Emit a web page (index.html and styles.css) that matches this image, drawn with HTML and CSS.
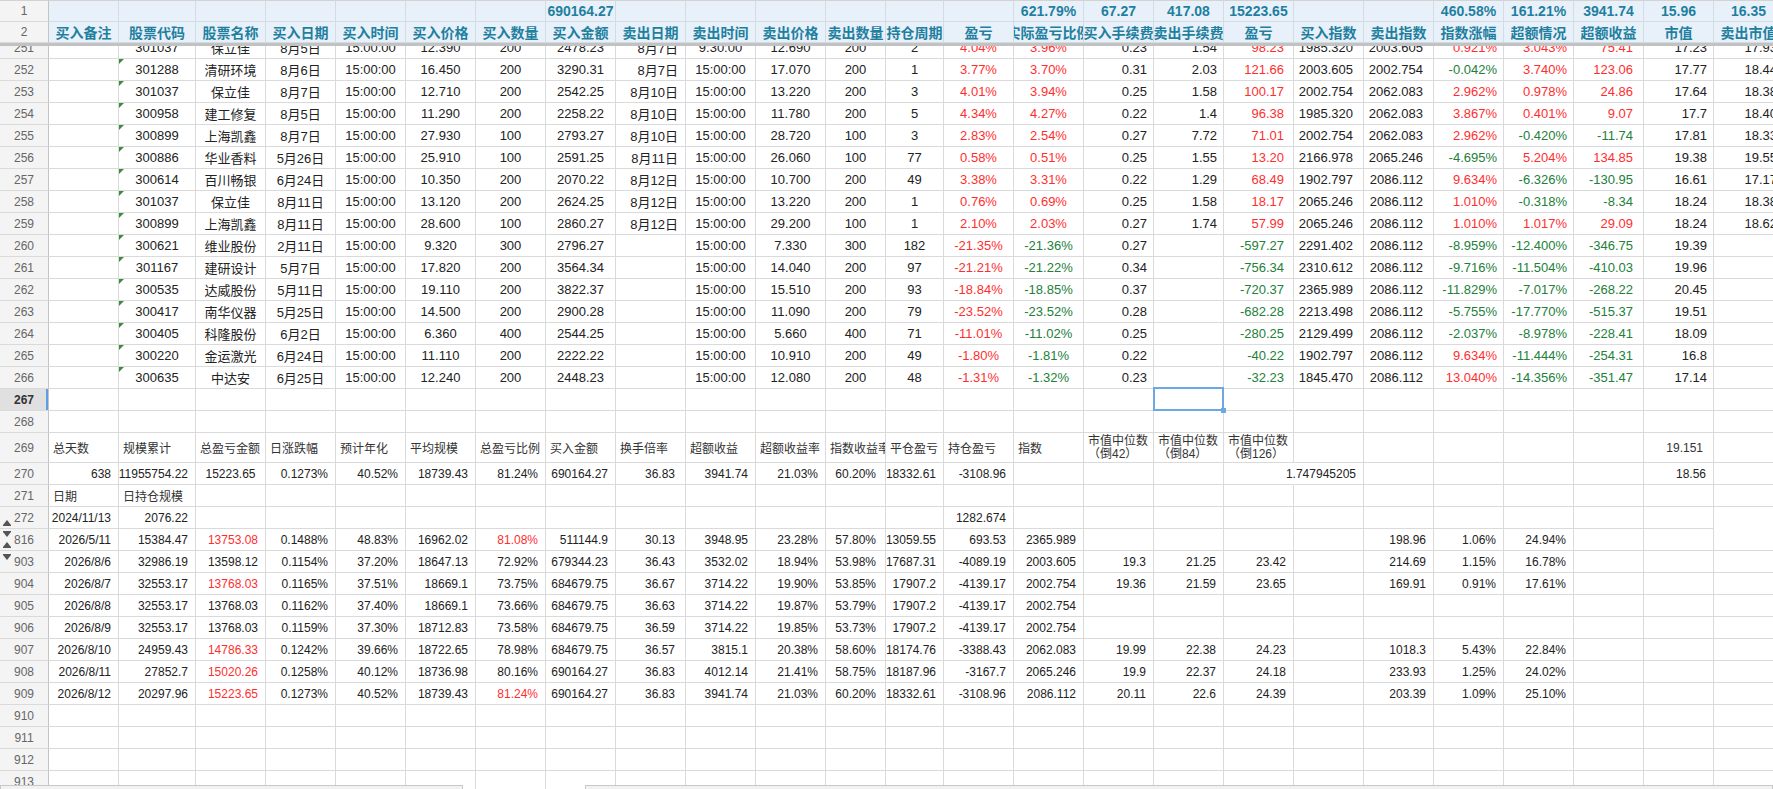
FILE: index.html
```html
<!DOCTYPE html>
<html lang="zh-CN">
<head>
<meta charset="utf-8">
<title>交易记录</title>
<link rel="stylesheet" href="styles.css">
</head>
<body>
<div class="sheet">
  <div class="frozen">
    <div class="r r1"><span>1</span><span></span><span></span><span></span><span></span><span></span><span></span><span></span><span>690164.27</span><span></span><span></span><span></span><span></span><span></span><span></span><span>621.79%</span><span>67.27</span><span>417.08</span><span>15223.65</span><span></span><span></span><span>460.58%</span><span>161.21%</span><span>3941.74</span><span>15.96</span><span>16.35</span></div>
    <div class="r r2"><span>2</span><span>买入备注</span><span>股票代码</span><span>股票名称</span><span>买入日期</span><span>买入时间</span><span>买入价格</span><span>买入数量</span><span>买入金额</span><span>卖出日期</span><span>卖出时间</span><span>卖出价格</span><span>卖出数量</span><span>持仓周期</span><span>盈亏</span><span>实际盈亏比例</span><span>买入手续费</span><span>卖出手续费</span><span>盈亏</span><span>买入指数</span><span>卖出指数</span><span>指数涨幅</span><span>超额情况</span><span>超额收益</span><span>市值</span><span>卖出市值</span></div>
  </div>
  <div class="divider"></div>
  <div class="body">
    <div class="data">
      <div class="r"><span>251</span><span></span><span>301037</span><span>保立佳</span><span>8月5日</span><span>15:00:00</span><span>12.390</span><span>200</span><span>2478.23</span><span>8月7日</span><span>9:30:00</span><span>12.690</span><span>200</span><span>2</span><span class="up">4.04%</span><span class="up">3.96%</span><span>0.23</span><span>1.54</span><span class="up">98.23</span><span>1985.320</span><span>2003.605</span><span class="up">0.921%</span><span class="up">3.043%</span><span class="up">75.41</span><span>17.23</span><span>17.93</span></div>
      <div class="r"><span>252</span><span></span><span>301288</span><span>清研环境</span><span>8月6日</span><span>15:00:00</span><span>16.450</span><span>200</span><span>3290.31</span><span>8月7日</span><span>15:00:00</span><span>17.070</span><span>200</span><span>1</span><span class="up">3.77%</span><span class="up">3.70%</span><span>0.31</span><span>2.03</span><span class="up">121.66</span><span>2003.605</span><span>2002.754</span><span class="dn">-0.042%</span><span class="up">3.740%</span><span class="up">123.06</span><span>17.77</span><span>18.44</span></div>
      <div class="r"><span>253</span><span></span><span>301037</span><span>保立佳</span><span>8月7日</span><span>15:00:00</span><span>12.710</span><span>200</span><span>2542.25</span><span>8月10日</span><span>15:00:00</span><span>13.220</span><span>200</span><span>3</span><span class="up">4.01%</span><span class="up">3.94%</span><span>0.25</span><span>1.58</span><span class="up">100.17</span><span>2002.754</span><span>2062.083</span><span class="up">2.962%</span><span class="up">0.978%</span><span class="up">24.86</span><span>17.64</span><span>18.38</span></div>
      <div class="r"><span>254</span><span></span><span>300958</span><span>建工修复</span><span>8月5日</span><span>15:00:00</span><span>11.290</span><span>200</span><span>2258.22</span><span>8月10日</span><span>15:00:00</span><span>11.780</span><span>200</span><span>5</span><span class="up">4.34%</span><span class="up">4.27%</span><span>0.22</span><span>1.4</span><span class="up">96.38</span><span>1985.320</span><span>2062.083</span><span class="up">3.867%</span><span class="up">0.401%</span><span class="up">9.07</span><span>17.7</span><span>18.40</span></div>
      <div class="r"><span>255</span><span></span><span>300899</span><span>上海凯鑫</span><span>8月7日</span><span>15:00:00</span><span>27.930</span><span>100</span><span>2793.27</span><span>8月10日</span><span>15:00:00</span><span>28.720</span><span>100</span><span>3</span><span class="up">2.83%</span><span class="up">2.54%</span><span>0.27</span><span>7.72</span><span class="up">71.01</span><span>2002.754</span><span>2062.083</span><span class="up">2.962%</span><span class="dn">-0.420%</span><span class="dn">-11.74</span><span>17.81</span><span>18.33</span></div>
      <div class="r"><span>256</span><span></span><span>300886</span><span>华业香料</span><span>5月26日</span><span>15:00:00</span><span>25.910</span><span>100</span><span>2591.25</span><span>8月11日</span><span>15:00:00</span><span>26.060</span><span>100</span><span>77</span><span class="up">0.58%</span><span class="up">0.51%</span><span>0.25</span><span>1.55</span><span class="up">13.20</span><span>2166.978</span><span>2065.246</span><span class="dn">-4.695%</span><span class="up">5.204%</span><span class="up">134.85</span><span>19.38</span><span>19.55</span></div>
      <div class="r"><span>257</span><span></span><span>300614</span><span>百川畅银</span><span>6月24日</span><span>15:00:00</span><span>10.350</span><span>200</span><span>2070.22</span><span>8月12日</span><span>15:00:00</span><span>10.700</span><span>200</span><span>49</span><span class="up">3.38%</span><span class="up">3.31%</span><span>0.22</span><span>1.29</span><span class="up">68.49</span><span>1902.797</span><span>2086.112</span><span class="up">9.634%</span><span class="dn">-6.326%</span><span class="dn">-130.95</span><span>16.61</span><span>17.17</span></div>
      <div class="r"><span>258</span><span></span><span>301037</span><span>保立佳</span><span>8月11日</span><span>15:00:00</span><span>13.120</span><span>200</span><span>2624.25</span><span>8月12日</span><span>15:00:00</span><span>13.220</span><span>200</span><span>1</span><span class="up">0.76%</span><span class="up">0.69%</span><span>0.25</span><span>1.58</span><span class="up">18.17</span><span>2065.246</span><span>2086.112</span><span class="up">1.010%</span><span class="dn">-0.318%</span><span class="dn">-8.34</span><span>18.24</span><span>18.38</span></div>
      <div class="r"><span>259</span><span></span><span>300899</span><span>上海凯鑫</span><span>8月11日</span><span>15:00:00</span><span>28.600</span><span>100</span><span>2860.27</span><span>8月12日</span><span>15:00:00</span><span>29.200</span><span>100</span><span>1</span><span class="up">2.10%</span><span class="up">2.03%</span><span>0.27</span><span>1.74</span><span class="up">57.99</span><span>2065.246</span><span>2086.112</span><span class="up">1.010%</span><span class="up">1.017%</span><span class="up">29.09</span><span>18.24</span><span>18.62</span></div>
      <div class="r"><span>260</span><span></span><span>300621</span><span>维业股份</span><span>2月11日</span><span>15:00:00</span><span>9.320</span><span>300</span><span>2796.27</span><span></span><span>15:00:00</span><span>7.330</span><span>300</span><span>182</span><span class="up">-21.35%</span><span class="dn">-21.36%</span><span>0.27</span><span></span><span class="dn">-597.27</span><span>2291.402</span><span>2086.112</span><span class="dn">-8.959%</span><span class="dn">-12.400%</span><span class="dn">-346.75</span><span>19.39</span><span></span></div>
      <div class="r"><span>261</span><span></span><span>301167</span><span>建研设计</span><span>5月7日</span><span>15:00:00</span><span>17.820</span><span>200</span><span>3564.34</span><span></span><span>15:00:00</span><span>14.040</span><span>200</span><span>97</span><span class="up">-21.21%</span><span class="dn">-21.22%</span><span>0.34</span><span></span><span class="dn">-756.34</span><span>2310.612</span><span>2086.112</span><span class="dn">-9.716%</span><span class="dn">-11.504%</span><span class="dn">-410.03</span><span>19.96</span><span></span></div>
      <div class="r"><span>262</span><span></span><span>300535</span><span>达威股份</span><span>5月11日</span><span>15:00:00</span><span>19.110</span><span>200</span><span>3822.37</span><span></span><span>15:00:00</span><span>15.510</span><span>200</span><span>93</span><span class="up">-18.84%</span><span class="dn">-18.85%</span><span>0.37</span><span></span><span class="dn">-720.37</span><span>2365.989</span><span>2086.112</span><span class="dn">-11.829%</span><span class="dn">-7.017%</span><span class="dn">-268.22</span><span>20.45</span><span></span></div>
      <div class="r"><span>263</span><span></span><span>300417</span><span>南华仪器</span><span>5月25日</span><span>15:00:00</span><span>14.500</span><span>200</span><span>2900.28</span><span></span><span>15:00:00</span><span>11.090</span><span>200</span><span>79</span><span class="up">-23.52%</span><span class="dn">-23.52%</span><span>0.28</span><span></span><span class="dn">-682.28</span><span>2213.498</span><span>2086.112</span><span class="dn">-5.755%</span><span class="dn">-17.770%</span><span class="dn">-515.37</span><span>19.51</span><span></span></div>
      <div class="r"><span>264</span><span></span><span>300405</span><span>科隆股份</span><span>6月2日</span><span>15:00:00</span><span>6.360</span><span>400</span><span>2544.25</span><span></span><span>15:00:00</span><span>5.660</span><span>400</span><span>71</span><span class="up">-11.01%</span><span class="dn">-11.02%</span><span>0.25</span><span></span><span class="dn">-280.25</span><span>2129.499</span><span>2086.112</span><span class="dn">-2.037%</span><span class="dn">-8.978%</span><span class="dn">-228.41</span><span>18.09</span><span></span></div>
      <div class="r"><span>265</span><span></span><span>300220</span><span>金运激光</span><span>6月24日</span><span>15:00:00</span><span>11.110</span><span>200</span><span>2222.22</span><span></span><span>15:00:00</span><span>10.910</span><span>200</span><span>49</span><span class="up">-1.80%</span><span class="dn">-1.81%</span><span>0.22</span><span></span><span class="dn">-40.22</span><span>1902.797</span><span>2086.112</span><span class="up">9.634%</span><span class="dn">-11.444%</span><span class="dn">-254.31</span><span>16.8</span><span></span></div>
      <div class="r"><span>266</span><span></span><span>300635</span><span>中达安</span><span>6月25日</span><span>15:00:00</span><span>12.240</span><span>200</span><span>2448.23</span><span></span><span>15:00:00</span><span>12.080</span><span>200</span><span>48</span><span class="up">-1.31%</span><span class="dn">-1.32%</span><span>0.23</span><span></span><span class="dn">-32.23</span><span>1845.470</span><span>2086.112</span><span class="up">13.040%</span><span class="dn">-14.356%</span><span class="dn">-351.47</span><span>17.14</span><span></span></div>
    </div>
    <div class="sum">
      <div class="r cur"><span>267</span><span></span><span></span><span></span><span></span><span></span><span></span><span></span><span></span><span></span><span></span><span></span><span></span><span></span><span></span><span></span><span></span><span class="sel"></span><span></span><span></span><span></span><span></span><span></span><span></span><span></span><span></span></div>
      <div class="r"><span>268</span><span></span><span></span><span></span><span></span><span></span><span></span><span></span><span></span><span></span><span></span><span></span><span></span><span></span><span></span><span></span><span></span><span></span><span></span><span></span><span></span><span></span><span></span><span></span><span></span><span></span></div>
      <div class="r lbl tall"><span>269</span><span>总天数</span><span>规模累计</span><span>总盈亏金额</span><span>日涨跌幅</span><span>预计年化</span><span>平均规模</span><span>总盈亏比例</span><span>买入金额</span><span>换手倍率</span><span>超额收益</span><span>超额收益率</span><span>指数收益率</span><span>平仓盈亏</span><span>持仓盈亏</span><span>指数</span><span><em class="two">市值中位数<br>（倒42）</em></span><span><em class="two">市值中位数<br>（倒84）</em></span><span><em class="two">市值中位数<br>（倒126）</em></span><span></span><span></span><span></span><span></span><span></span><span class="ra">19.151</span><span></span></div>
      <div class="r"><span>270</span><span>638</span><span>11955754.22</span><span class="ctr">15223.65</span><span>0.1273%</span><span>40.52%</span><span>18739.43</span><span>81.24%</span><span>690164.27</span><span>36.83</span><span>3941.74</span><span>21.03%</span><span>60.20%</span><span>18332.61</span><span>-3108.96</span><span></span><span></span><span></span><span class="nb"></span><span class="ovf">1.747945205</span><span></span><span></span><span></span><span></span><span>18.56</span><span></span></div>
      <div class="r lbl"><span>271</span><span>日期</span><span>日持仓规模</span><span></span><span></span><span></span><span></span><span></span><span></span><span></span><span></span><span></span><span></span><span></span><span></span><span></span><span></span><span></span><span></span><span></span><span></span><span></span><span></span><span></span><span></span><span></span></div>
      <div class="r"><span>272<i class="tu m272"></i></span><span>2024/11/13</span><span>2076.22</span><span></span><span></span><span></span><span></span><span></span><span></span><span></span><span></span><span></span><span></span><span></span><span>1282.674</span><span></span><span></span><span></span><span></span><span></span><span></span><span></span><span></span><span></span><span></span></div>
      <div class="r"><span>816<i class="td m816a"></i><i class="tu m816b"></i></span><span>2026/5/11</span><span>15384.47</span><span class="up">13753.08</span><span>0.1488%</span><span>48.83%</span><span>16962.02</span><span class="up">81.08%</span><span>511144.9</span><span>30.13</span><span>3948.95</span><span>23.28%</span><span>57.80%</span><span>13059.55</span><span>693.53</span><span>2365.989</span><span></span><span></span><span></span><span></span><span>198.96</span><span>1.06%</span><span>24.94%</span><span></span><span></span><span></span></div>
      <div class="r"><span>903<i class="td m903"></i></span><span>2026/8/6</span><span>32986.19</span><span>13598.12</span><span>0.1154%</span><span>37.20%</span><span>18647.13</span><span>72.92%</span><span>679344.23</span><span>36.43</span><span>3532.02</span><span>18.94%</span><span>53.98%</span><span>17687.31</span><span>-4089.19</span><span>2003.605</span><span>19.3</span><span>21.25</span><span>23.42</span><span></span><span>214.69</span><span>1.15%</span><span>16.78%</span><span></span><span></span><span></span></div>
      <div class="r"><span>904</span><span>2026/8/7</span><span>32553.17</span><span class="up">13768.03</span><span>0.1165%</span><span>37.51%</span><span>18669.1</span><span>73.75%</span><span>684679.75</span><span>36.67</span><span>3714.22</span><span>19.90%</span><span>53.85%</span><span>17907.2</span><span>-4139.17</span><span>2002.754</span><span>19.36</span><span>21.59</span><span>23.65</span><span></span><span>169.91</span><span>0.91%</span><span>17.61%</span><span></span><span></span><span></span></div>
      <div class="r"><span>905</span><span>2026/8/8</span><span>32553.17</span><span>13768.03</span><span>0.1162%</span><span>37.40%</span><span>18669.1</span><span>73.66%</span><span>684679.75</span><span>36.63</span><span>3714.22</span><span>19.87%</span><span>53.79%</span><span>17907.2</span><span>-4139.17</span><span>2002.754</span><span></span><span></span><span></span><span></span><span></span><span></span><span></span><span></span><span></span><span></span></div>
      <div class="r"><span>906</span><span>2026/8/9</span><span>32553.17</span><span>13768.03</span><span>0.1159%</span><span>37.30%</span><span>18712.83</span><span>73.58%</span><span>684679.75</span><span>36.59</span><span>3714.22</span><span>19.85%</span><span>53.73%</span><span>17907.2</span><span>-4139.17</span><span>2002.754</span><span></span><span></span><span></span><span></span><span></span><span></span><span></span><span></span><span></span><span></span></div>
      <div class="r"><span>907</span><span>2026/8/10</span><span>24959.43</span><span class="up">14786.33</span><span>0.1242%</span><span>39.66%</span><span>18722.65</span><span>78.98%</span><span>684679.75</span><span>36.57</span><span>3815.1</span><span>20.38%</span><span>58.60%</span><span>18174.76</span><span>-3388.43</span><span>2062.083</span><span>19.99</span><span>22.38</span><span>24.23</span><span></span><span>1018.3</span><span>5.43%</span><span>22.84%</span><span></span><span></span><span></span></div>
      <div class="r"><span>908</span><span>2026/8/11</span><span>27852.7</span><span class="up">15020.26</span><span>0.1258%</span><span>40.12%</span><span>18736.98</span><span>80.16%</span><span>690164.27</span><span>36.83</span><span>4012.14</span><span>21.41%</span><span>58.75%</span><span>18187.96</span><span>-3167.7</span><span>2065.246</span><span>19.9</span><span>22.37</span><span>24.18</span><span></span><span>233.93</span><span>1.25%</span><span>24.02%</span><span></span><span></span><span></span></div>
      <div class="r"><span>909</span><span>2026/8/12</span><span>20297.96</span><span class="up">15223.65</span><span>0.1273%</span><span>40.52%</span><span>18739.43</span><span class="up">81.24%</span><span>690164.27</span><span>36.83</span><span>3941.74</span><span>21.03%</span><span>60.20%</span><span>18332.61</span><span>-3108.96</span><span>2086.112</span><span>20.11</span><span>22.6</span><span>24.39</span><span></span><span>203.39</span><span>1.09%</span><span>25.10%</span><span></span><span></span><span></span></div>
      <div class="r"><span>910</span><span></span><span></span><span></span><span></span><span></span><span></span><span></span><span></span><span></span><span></span><span></span><span></span><span></span><span></span><span></span><span></span><span></span><span></span><span></span><span></span><span></span><span></span><span></span><span></span><span></span></div>
      <div class="r"><span>911</span><span></span><span></span><span></span><span></span><span></span><span></span><span></span><span></span><span></span><span></span><span></span><span></span><span></span><span></span><span></span><span></span><span></span><span></span><span></span><span></span><span></span><span></span><span></span><span></span><span></span></div>
      <div class="r"><span>912</span><span></span><span></span><span></span><span></span><span></span><span></span><span></span><span></span><span></span><span></span><span></span><span></span><span></span><span></span><span></span><span></span><span></span><span></span><span></span><span></span><span></span><span></span><span></span><span></span><span></span></div>
      <div class="r"><span>913</span><span></span><span></span><span></span><span></span><span></span><span></span><span></span><span></span><span></span><span></span><span></span><span></span><span></span><span></span><span></span><span></span><span></span><span></span><span></span><span></span><span></span><span></span><span></span><span></span><span></span></div>
    </div>
  </div>
  <div class="hbar hbar-a"></div>
  <div class="hbar hbar-b"></div>
</div>
</body>
</html>
```
FILE: styles.css
```css
* { box-sizing: border-box; }
html, body { margin: 0; padding: 0; background: #fff; }
body {
  font-family: "Liberation Sans", "Noto Sans CJK SC", Arial, sans-serif;
  color: #222;
  overflow: hidden;
}
.sheet {
  position: relative;
  width: 1773px;
  height: 789px;
  overflow: hidden;
  display: flex;
  flex-direction: column;
}
.frozen { flex: none; }
.divider { flex: none; height: 3px; width: 1784px; background: #c2c2c2; }
.body { flex: 1 1 auto; min-height: 0; overflow: hidden; }

.r {
  display: grid;
  grid-template-columns: 49px 70px 77px repeat(9, 70px) 60px 58px repeat(12, 70px);
  width: 1784px;
  height: 22px;
}
.r > span {
  position: relative;
  display: flex;
  align-items: center;
  justify-content: center;
  overflow: hidden;
  white-space: nowrap;
  border-right: 1px solid #dadada;
  border-bottom: 1px solid #dadada;
  font-size: 13px;
}
.r > span:first-child {
  background: #f4f4f4;
  color: #666;
  font-size: 12px;
  border-right-color: #c4c4c4;
}

/* frozen header rows */
.frozen .r > span {
  background: #e8f1fa;
  color: #1f7f9f;
  font-weight: bold;
  font-size: 14px;
  border-color: #d3dbe3;
}
.frozen .r > span:first-child {
  background: #f4f4f4;
  color: #666;
  font-weight: normal;
  font-size: 12px;
  border-right-color: #c4c4c4;
}
.frozen .r1 > span { border-top: 1px solid #d3d3d3; }
.frozen .r2 { height: 21px; }

/* scrolled data rows */
.data .r:first-child { margin-top: -9px; }
.data .r > span:nth-child(3)::before {
  content: "";
  position: absolute;
  left: 0;
  top: 0;
  border-top: 5px solid #3a8d3a;
  border-right: 5px solid transparent;
}
.data .r > span:nth-child(10),
.data .r > span:nth-child(n+17) {
  justify-content: flex-end;
  padding-right: 6px;
}
.data .r > span:nth-child(10) { padding-right: 7px; }
.data .r > span:nth-child(19) { padding-right: 9px; }
.data .r > span:nth-child(20),
.data .r > span:nth-child(21),
.data .r > span:nth-child(24) { padding-right: 10px; }

.up { color: #ff2e2e; }
.dn { color: #22803a; }

/* summary block */
.sum .r > span {
  font-size: 12px;
  justify-content: flex-end;
  padding-right: 7px;
}
.sum .r > span:first-child { justify-content: center; padding: 0; }
.sum .r > span:nth-child(10) { padding-right: 10px; }
.sum .r > span:nth-child(13) { padding-right: 9px; }
.sum .r.tall { height: 30px; }
.sum .r.lbl > span:not(:first-child) {
  justify-content: flex-start;
  padding-left: 4px;
  padding-right: 0;
  color: #333;
}
.sum .r.lbl > span.ra { justify-content: flex-end; padding-right: 10px; padding-left: 0; }
.two { display: block; font-style: normal; line-height: 13px; white-space: nowrap; }
.sum .r > span.ctr { justify-content: center; padding: 0; }
.sum .r > span.nb { border-right-color: transparent; }
.sum .r > span.ovf { overflow: visible; }

.sum .r.cur > span:first-child {
  background: #e0e0e0;
  color: #333;
  font-weight: bold;
  box-shadow: inset -2px 0 #5d9fe2;
}
.sum .r > span.sel { overflow: visible; z-index: 3; }
.sel::after {
  content: "";
  position: absolute;
  left: -1px;
  top: -2px;
  right: -1px;
  bottom: -1px;
  border: 2px solid #6ea8e4;
}
.sel::before {
  content: "";
  position: absolute;
  right: -3px;
  bottom: -3px;
  width: 5px;
  height: 5px;
  background: #6ea8e4;
  z-index: 1;
}

/* hidden-row markers in the row header */
.tu, .td {
  position: absolute;
  left: 3px;
  width: 0;
  height: 0;
  border-left: 4px solid transparent;
  border-right: 4px solid transparent;
}
.tu { border-bottom: 5px solid #555; }
.td { border-top: 5px solid #555; }
.tu::after, .td::after {
  content: "";
  position: absolute;
  left: -4px;
  width: 8px;
  height: 1px;
  background: #555;
}
.tu::after { top: 5px; }
.td::after { top: -6px; }
.m272 { bottom: 3px; }
.m816a { top: 3px; }
.m816b { bottom: 3px; }
.m903 { top: 4px; }

/* scrollbar strips at the bottom edge */
.hbar {
  position: absolute;
  bottom: 0;
  height: 4px;
  background: #f2f2f2;
  border: 1px solid #c8c8c8;
  border-bottom: none;
}
.hbar-a { left: 0; width: 463px; }
.hbar-b { left: 585px; right: 0; }
```
